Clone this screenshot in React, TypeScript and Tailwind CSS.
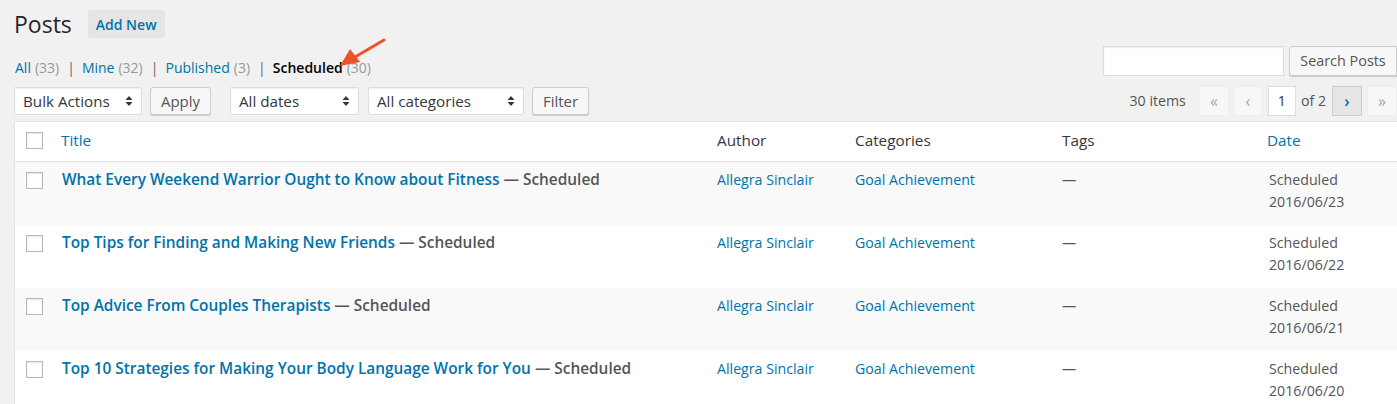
import React from 'react'

const rows = [
  { title: 'What Every Weekend Warrior Ought to Know about Fitness', date: '2016/06/23' },
  { title: 'Top Tips for Finding and Making New Friends', date: '2016/06/22' },
  { title: 'Top Advice From Couples Therapists', date: '2016/06/21' },
  { title: 'Top 10 Strategies for Making Your Body Language Work for You', date: '2016/06/20' },
]

function Arrows() {
  return (
    <svg width="8" height="12" viewBox="0 0 8 12" className="shrink-0">
      <path d="M4 1 L7.5 5 H0.5 Z M4 11 L7.5 7 H0.5 Z" fill="#32373c" />
    </svg>
  )
}

function Select({ label, w }: { label: string; w: string }) {
  return (
    <div
      className={`${w} h-[28px] flex items-center justify-between pl-[8px] pr-[8px] bg-white border border-[#ddd] rounded-[2px] shadow-[inset_0_1px_2px_rgba(0,0,0,0.07)] text-[15.2px] text-[#32373c]`}
    >
      <span>{label}</span>
      <Arrows />
    </div>
  )
}

function Button({ label, cls = '' }: { label: string; cls?: string }) {
  return (
    <div
      className={`h-[28px] flex items-center px-[10px] bg-[#f7f7f7] border border-[#ccc] rounded-[3px] shadow-[0_1px_0_#ccc] text-[#555] whitespace-nowrap ${cls}`}
    >
      {label}
    </div>
  )
}

function Checkbox() {
  return <div className="w-[17px] h-[17px] bg-white border border-[#b4b9be] shadow-[inset_0_1px_2px_rgba(0,0,0,0.1)]" />
}

function PageBtn({ label, active = false }: { label: string; active?: boolean }) {
  return (
    <div
      className={
        active
          ? 'w-[30px] h-[30px] flex items-center justify-center bg-[#e5e5e5] border border-[#ccc] text-[#0073aa] text-[16px] font-semibold'
          : 'w-[30px] h-[30px] flex items-center justify-center bg-[#f7f7f7] border border-[#eee] text-[#a0a5aa] text-[16px]'
      }
    >
      {label}
    </div>
  )
}

export default function App() {
  return (
    <div
      className="relative w-[1397px] h-[404px] overflow-hidden bg-[#f1f1f1] pl-[14px]"
      style={{ fontFamily: '"Open Sans", sans-serif' }}
    >
      {/* heading */}
      <div className="flex items-center pt-[9px] h-[39px]">
        <h1 className="text-[23px] leading-[29px] text-[#23282d] font-normal">Posts</h1>
        <div className="ml-[16px] h-[28px] flex items-center px-[8px] bg-[#e5e5e5] rounded-[2px] text-[14px] font-semibold text-[#0073aa]">
          Add New
        </div>
      </div>

      {/* views + search */}
      <div className="flex items-start justify-between mt-[7px]">
        <div className="flex items-center text-[14px] mt-[12px] leading-[20px] text-[#555]">
          <span className="text-[#0073aa] ml-[1px]">All</span>
          <span className="text-[#999] ml-[4px]">(33)</span>
          <span className="text-[#666] ml-[8px] mr-[7px]">|</span>
          <span className="text-[#0073aa]">Mine</span>
          <span className="text-[#999] ml-[4px]">(32)</span>
          <span className="text-[#666] ml-[8px] mr-[7px]">|</span>
          <span className="text-[#0073aa]">Published</span>
          <span className="text-[#999] ml-[4px]">(3)</span>
          <span className="text-[#666] ml-[8px] mr-[7px]">|</span>
          <span className="text-black font-semibold">Scheduled</span>
          <span className="text-[#999] ml-[4px]">(30)</span>
        </div>
        <div className="flex items-center gap-[5px]">
          <div className="w-[181px] h-[30px] bg-white border border-[#ddd] shadow-[inset_0_1px_2px_rgba(0,0,0,0.07)]" />
          <Button label="Search Posts" cls="h-[30px] w-[108px] justify-center text-[14.4px] rounded-r-none" />
        </div>
      </div>

      {/* filters + pagination */}
      <div className="flex items-center justify-between mt-[8px] h-[30px]">
        <div className="flex items-center">
          <Select label="Bulk Actions" w="w-[128px]" />
          <Button label="Apply" cls="ml-[8px] w-[61px] justify-center text-[15px]" />
          <Select label="All dates" w="ml-[19px] w-[129px]" />
          <Select label="All categories" w="ml-[9px] w-[156px]" />
          <Button label="Filter" cls="ml-[8px] w-[57px] justify-center text-[15px]" />
        </div>
        <div className="flex items-center text-[14.2px] text-[#555]">
          <span className="mr-[13px]">30 items</span>
          <PageBtn label="«" />
          <div className="ml-[4px]"><PageBtn label="‹" /></div>
          <div className="ml-[5px] w-[28px] h-[30px] bg-white border border-[#ddd] flex items-center justify-center text-[#32373c]">1</div>
          <span className="ml-[5px] mr-[6px]">of 2</span>
          <PageBtn label="›" active />
          <div className="ml-[5px]"><PageBtn label="»" /></div>
        </div>
      </div>

      {/* table */}
      <div className="mt-[5px] border-l border-t border-[#e5e5e5] bg-white shadow-[0_1px_1px_rgba(0,0,0,0.04)]">
        <div className="grid grid-cols-[36px_656px_138px_207px_205px_1fr] h-[40px] border-b border-[#e1e1e1] text-[15.3px] text-[#32373c]">
          <div className="pl-[11px] pt-[10px]"><Checkbox /></div>
          <div className="pl-[10px] pt-[7px] text-[#0073aa]">Title</div>
          <div className="pl-[10px] pt-[7px]">Author</div>
          <div className="pl-[10px] pt-[7px]">Categories</div>
          <div className="pl-[10px] pt-[7px]">Tags</div>
          <div className="pl-[10px] pt-[7px] text-[#0073aa]">Date</div>
        </div>
        {rows.map((r, i) => (
          <div
            key={i}
            className={`grid grid-cols-[36px_656px_138px_207px_205px_1fr] h-[63px] ${i % 2 === 0 ? 'bg-[#f9f9f9]' : 'bg-white'}`}
          >
            <div className="pl-[11px] pt-[10px]"><Checkbox /></div>
            <div className="pl-[11px] pt-[7px] text-[15.4px] leading-[22px] font-semibold whitespace-nowrap">
              <span className="text-[#0073aa]">{r.title}</span>
              <span className="text-[#555]"> — Scheduled</span>
            </div>
            <div className="pl-[10px] pt-[7px] text-[14.2px] leading-[22px] text-[#0073aa]">Allegra Sinclair</div>
            <div className="pl-[10px] pt-[7px] text-[14.2px] leading-[22px] text-[#0073aa]">Goal Achievement</div>
            <div className="pl-[10px] pt-[7px] text-[14.2px] leading-[22px] text-[#555]">—</div>
            <div className="pl-[12px] pt-[7px] text-[14.2px] leading-[22px] text-[#555]">
              <div>Scheduled</div>
              <div>{r.date}</div>
            </div>
          </div>
        ))}
      </div>

      {/* annotation arrow */}
      <svg className="absolute left-[336px] top-[36px]" width="52" height="34" viewBox="0 0 52 34">
        <path d="M48 4 L19 21" stroke="#f0512b" strokeWidth="3" strokeLinecap="round" />
        <path d="M4 30 L14 13 L24 26 Z" fill="#f0512b" />
      </svg>
    </div>
  )
}
